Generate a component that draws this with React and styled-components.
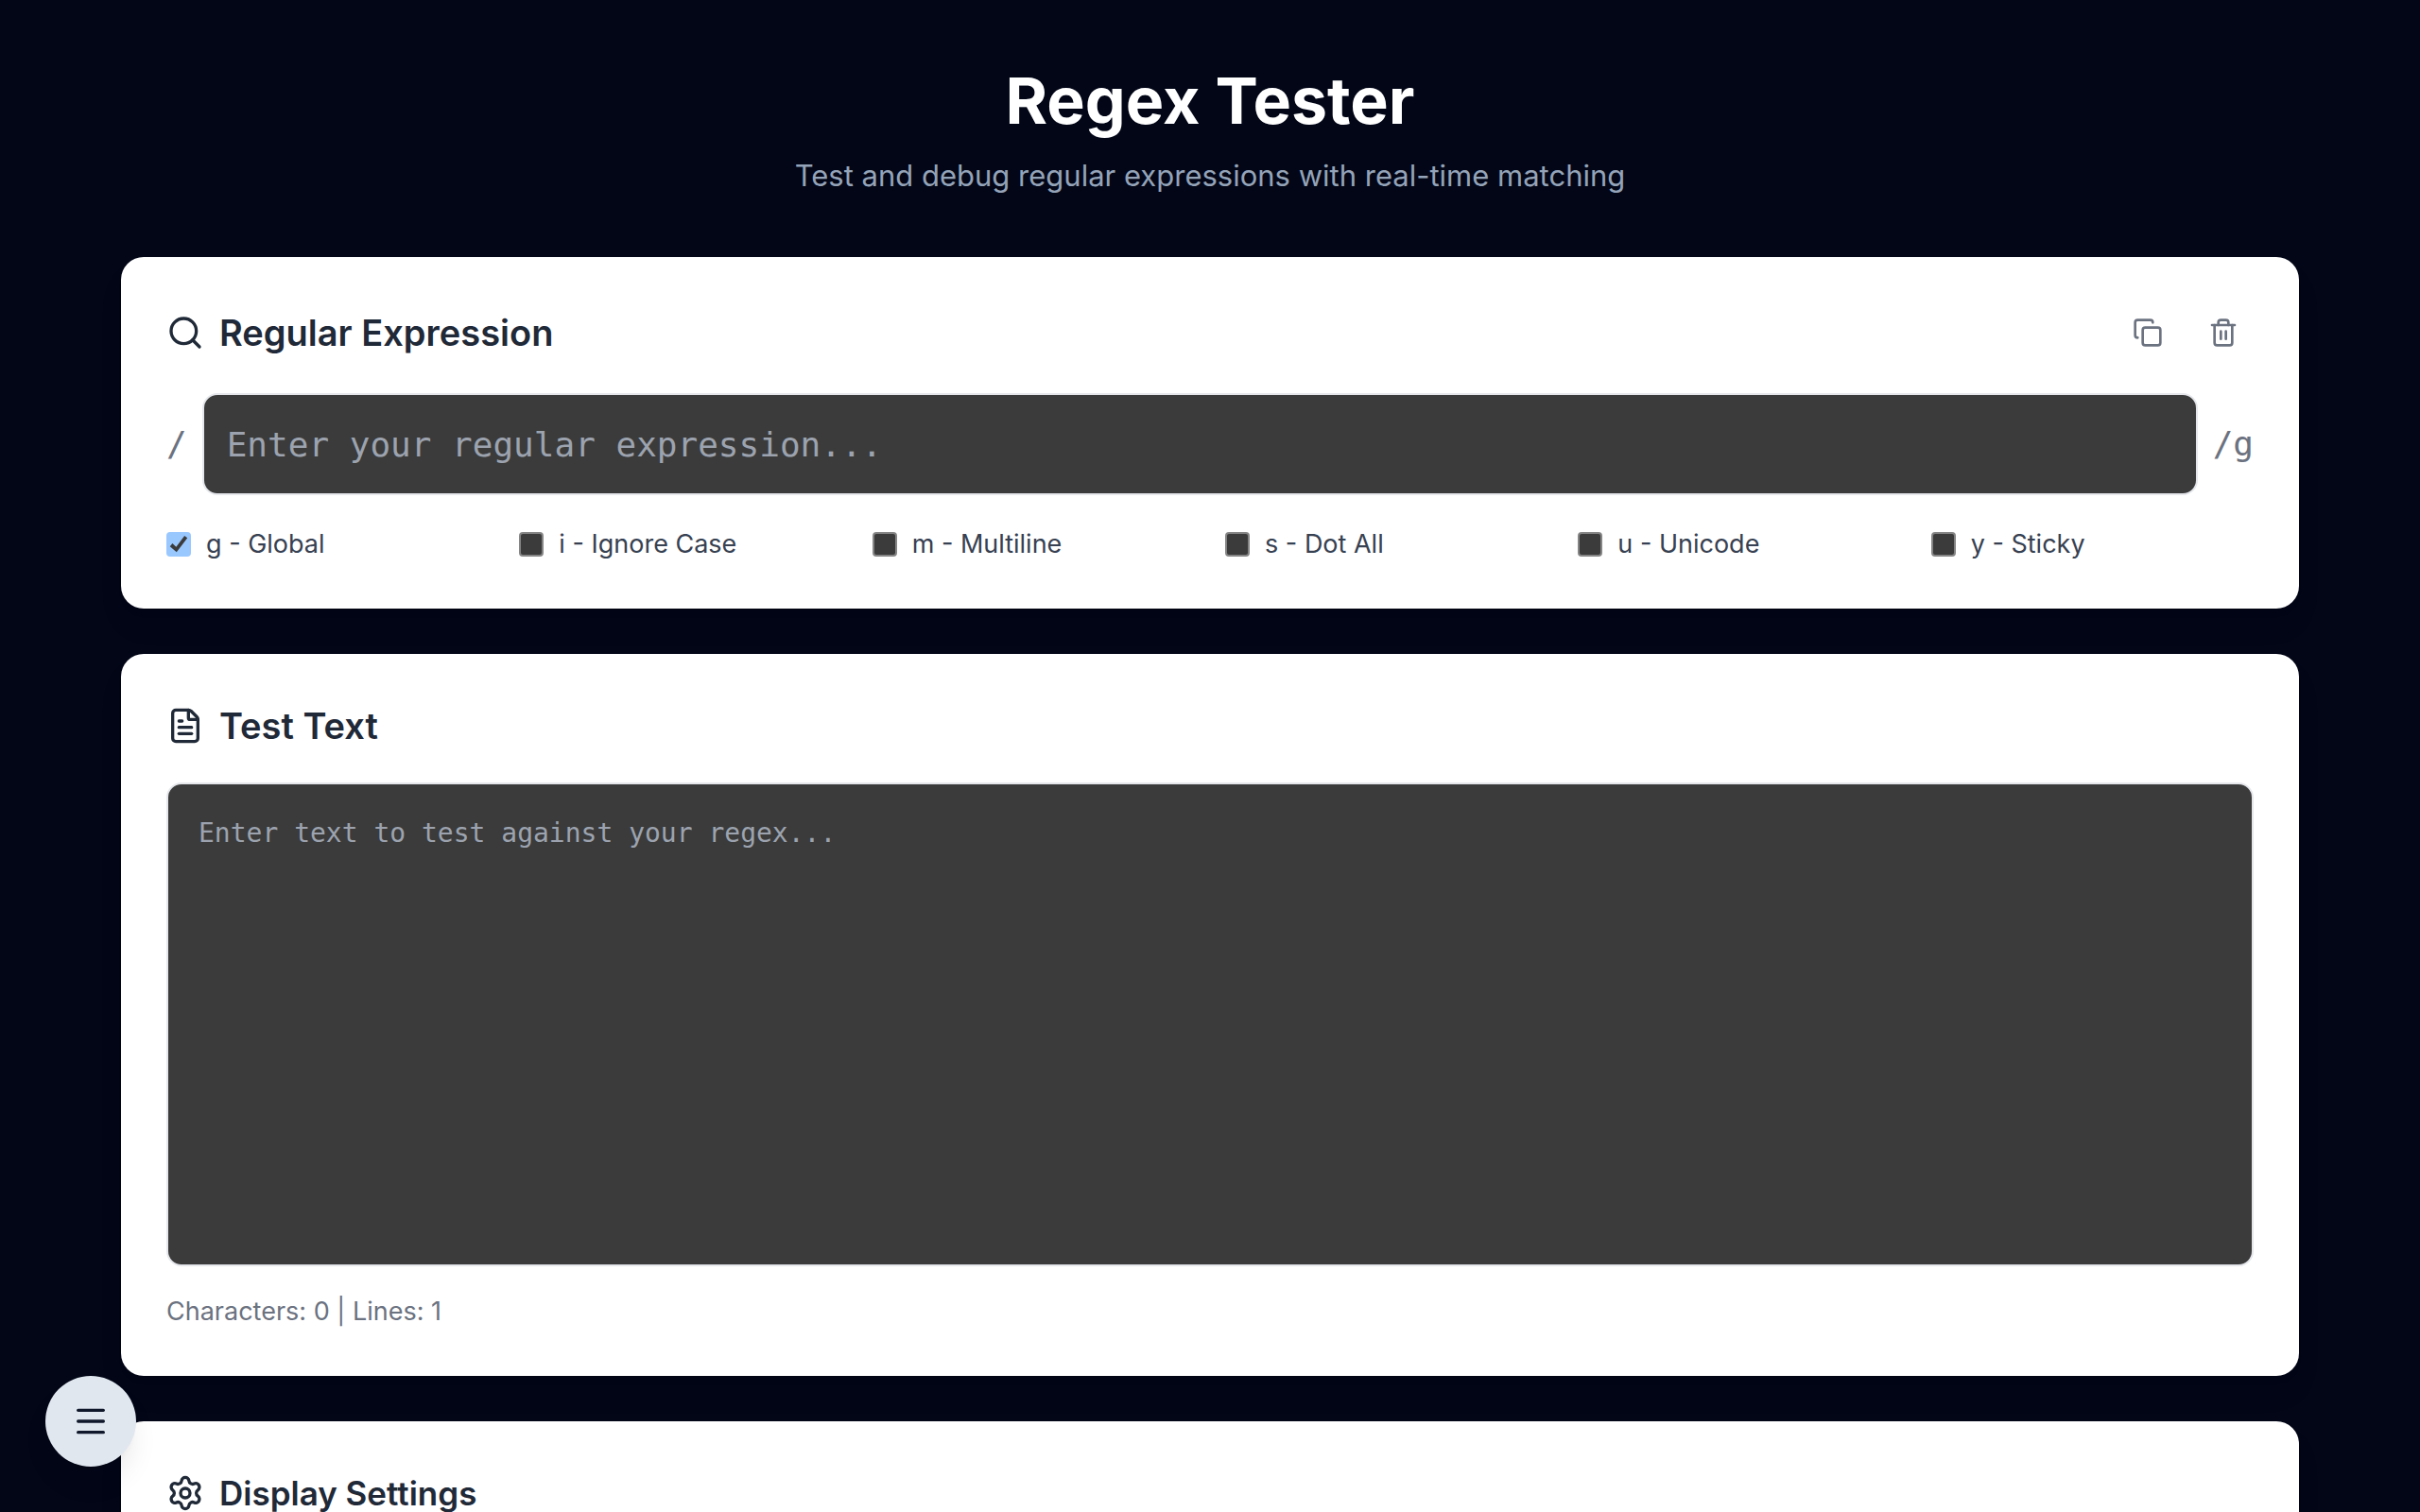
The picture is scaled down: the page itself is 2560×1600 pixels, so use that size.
import React, { useState } from "react";
import styled, { createGlobalStyle } from "styled-components";
import { Copy, FileText, Menu, Search, Settings, Trash2 } from "lucide-react";

const GlobalStyle = createGlobalStyle`
  *, *::before, *::after {
    box-sizing: border-box;
  }

  body {
    margin: 0;
    background-color: #020617;
    font-family: Inter, "Liberation Sans", sans-serif;
  }

  h1, h2, p {
    margin: 0;
  }
`;

const Page = styled.div`
  height: 100vh;
  overflow: hidden;
  padding: 66px 5%;
`;

const Header = styled.header`
  display: flex;
  flex-direction: column;
  gap: 16px;
  margin-bottom: 62px;
  text-align: center;
`;

const Title = styled.h1`
  font-size: 68px;
  line-height: 80px;
  font-weight: 700;
  color: #ffffff;
`;

const Subtitle = styled.p`
  font-size: 31px;
  line-height: 48px;
  color: #94a3b8;
`;

const Main = styled.main`
  display: flex;
  flex-direction: column;
  gap: 48px;
`;

const Card = styled.section`
  padding: 48px;
  border-radius: 24px;
  background-color: #ffffff;
  box-shadow: 0 20px 30px -6px rgba(0, 0, 0, 0.1),
    0 8px 12px -8px rgba(0, 0, 0, 0.1);
`;

const CardHeader = styled.div`
  display: flex;
  align-items: center;
  justify-content: space-between;
  margin-bottom: 32px;
`;

const CardTitle = styled.h2`
  display: flex;
  align-items: center;
  gap: 16px;
  font-size: ${props => (props.$small ? "35px" : "38px")};
  line-height: 56px;
  font-weight: 600;
  color: #1f2937;
`;

const Actions = styled.div`
  display: flex;
  gap: 16px;
`;

const IconButton = styled.button`
  display: flex;
  padding: 16px;
  border: none;
  border-radius: 16px;
  background: none;
  color: #6b7280;
  cursor: pointer;
`;

const PatternRow = styled.div`
  display: flex;
  align-items: center;
  gap: 16px;
  margin-bottom: 32px;
`;

const Delimiter = styled.span`
  font-family: "DejaVu Sans Mono", monospace;
  font-size: 36px;
  line-height: 56px;
  color: #6b7280;
`;

const PatternInput = styled.input`
  flex: 1;
  min-width: 0;
  height: 108px;
  padding: 24px;
  border: 2px solid #e5e7eb;
  border-radius: 16px;
  background-color: #3b3b3b;
  color: #ffffff;
  font-family: "DejaVu Sans Mono", monospace;
  font-size: 36px;
  line-height: 56px;

  &::placeholder {
    color: #9ca3af;
  }
`;

const FlagGrid = styled.div`
  display: grid;
  grid-template-columns: repeat(6, 1fr);
  gap: 32px;
`;

const FlagLabel = styled.label`
  display: flex;
  align-items: center;
  gap: 16px;
  font-size: 27px;
  line-height: 40px;
  color: #374151;
  cursor: pointer;
`;

const Checkbox = styled.input`
  appearance: none;
  width: 26px;
  height: 26px;
  margin: 0;
  border: 2px solid #858585;
  border-radius: 4px;
  background-color: #3b3b3b;

  &:checked {
    border-color: #99c8ff;
    background-color: #99c8ff;
  }

  &:checked::before {
    content: "";
    display: block;
    width: 22px;
    height: 22px;
    background-color: #3b3b3b;
    clip-path: polygon(8% 60%, 20% 46%, 38% 62%, 78% 9%, 92% 19%, 40% 88%);
  }
`;

const TestArea = styled.textarea`
  display: block;
  width: 100%;
  height: 512px;
  padding: 32px;
  border: 2px solid #e5e7eb;
  border-radius: 16px;
  background-color: #3b3b3b;
  color: #ffffff;
  font-family: "DejaVu Sans Mono", monospace;
  font-size: 28px;
  line-height: 40px;
  resize: none;

  &::placeholder {
    color: #9ca3af;
  }
`;

const Stats = styled.p`
  margin-top: 28px;
  font-size: 27px;
  line-height: 40px;
  color: #6b7280;
`;

const MenuButton = styled.button`
  position: fixed;
  left: 48px;
  bottom: 48px;
  display: flex;
  align-items: center;
  justify-content: center;
  width: 96px;
  height: 96px;
  padding: 0;
  border: none;
  border-radius: 50%;
  background-color: #e1e7ef;
  color: #0f172a;
  box-shadow: 0 20px 30px -6px rgba(0, 0, 0, 0.1),
    0 8px 12px -8px rgba(0, 0, 0, 0.1);
  cursor: pointer;
`;

const FLAGS = [
  { id: "g", name: "Global" },
  { id: "i", name: "Ignore Case" },
  { id: "m", name: "Multiline" },
  { id: "s", name: "Dot All" },
  { id: "u", name: "Unicode" },
  { id: "y", name: "Sticky" }
];

const App = () => {
  const [pattern, setPattern] = useState("");
  const [text, setText] = useState("");
  const [flags, setFlags] = useState(["g"]);

  const toggleFlag = id => {
    setFlags(
      flags.includes(id) ? flags.filter(flag => flag !== id) : [...flags, id]
    );
  };

  return (
    <Page>
      <GlobalStyle />
      <Header>
        <Title>Regex Tester</Title>
        <Subtitle>
          Test and debug regular expressions with real-time matching
        </Subtitle>
      </Header>
      <Main>
        <Card>
          <CardHeader>
            <CardTitle>
              <Search size={40} />
              Regular Expression
            </CardTitle>
            <Actions>
              <IconButton
                aria-label="Copy"
                onClick={() => navigator.clipboard.writeText(pattern)}
              >
                <Copy size={32} />
              </IconButton>
              <IconButton aria-label="Clear" onClick={() => setPattern("")}>
                <Trash2 size={32} />
              </IconButton>
            </Actions>
          </CardHeader>
          <PatternRow>
            <Delimiter>/</Delimiter>
            <PatternInput
              type="text"
              aria-label="Regular Expression"
              placeholder="Enter your regular expression..."
              value={pattern}
              onChange={e => setPattern(e.target.value)}
            />
            <Delimiter>/{flags.join("")}</Delimiter>
          </PatternRow>
          <FlagGrid>
            {FLAGS.map(({ id, name }) => (
              <FlagLabel key={id}>
                <Checkbox
                  type="checkbox"
                  checked={flags.includes(id)}
                  onChange={() => toggleFlag(id)}
                />
                <span>
                  {id} - {name}
                </span>
              </FlagLabel>
            ))}
          </FlagGrid>
        </Card>
        <Card>
          <CardHeader>
            <CardTitle>
              <FileText size={40} />
              Test Text
            </CardTitle>
          </CardHeader>
          <TestArea
            aria-label="Test Text"
            placeholder="Enter text to test against your regex..."
            value={text}
            onChange={e => setText(e.target.value)}
          />
          <Stats>
            Characters: {text.length} | Lines: {text.split("\n").length}
          </Stats>
        </Card>
        <Card>
          <CardHeader>
            <CardTitle $small>
              <Settings size={40} />
              Display Settings
            </CardTitle>
          </CardHeader>
        </Card>
      </Main>
      <MenuButton aria-label="Menu">
        <Menu size={40} />
      </MenuButton>
    </Page>
  );
};

export default App;
